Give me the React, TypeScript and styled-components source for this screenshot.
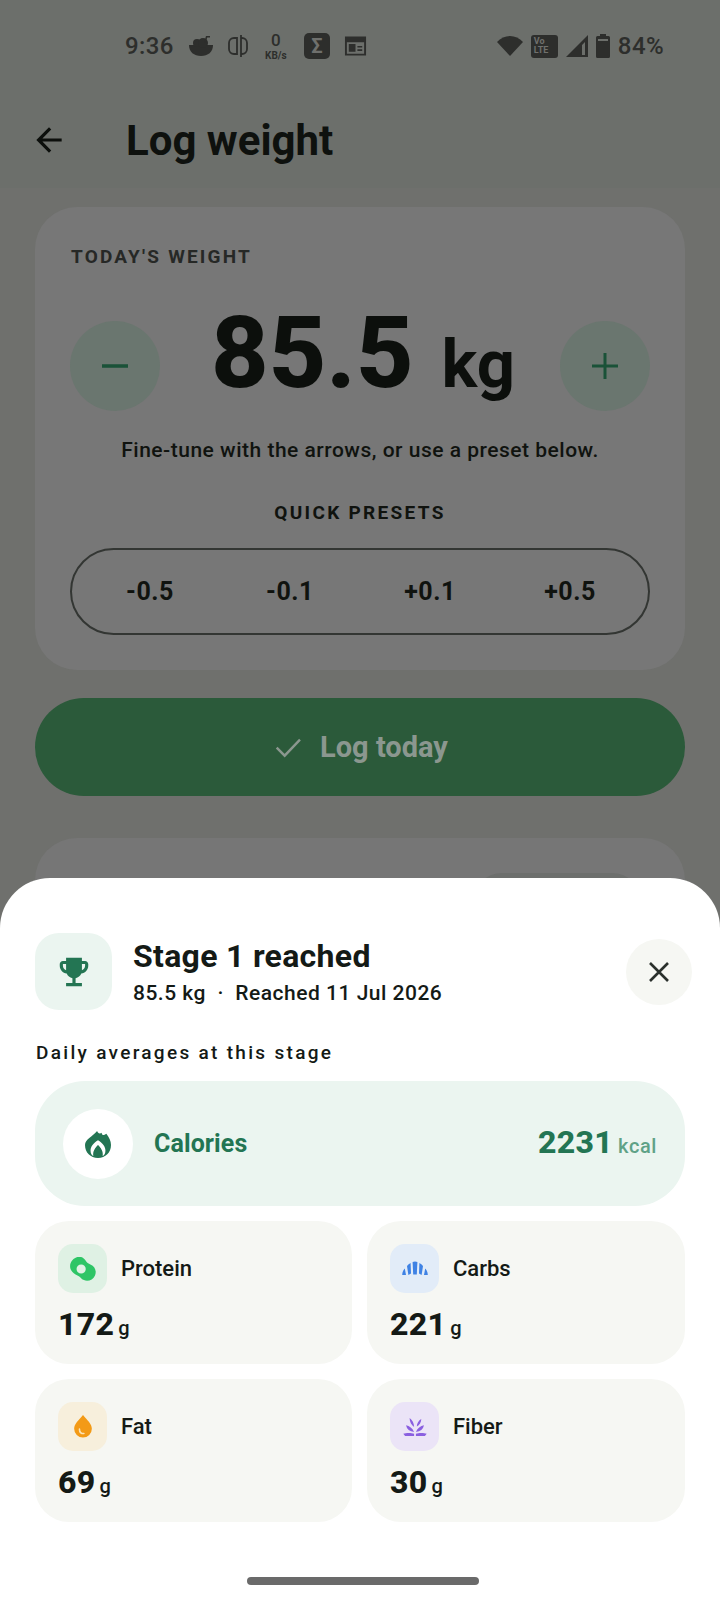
import styled, { createGlobalStyle } from "styled-components";

const GlobalStyle = createGlobalStyle`
  html, body {
    margin: 0;
    padding: 0;
    background: #6f706d;
    font-family: Roboto, "Liberation Sans", sans-serif;
  }
  * { box-sizing: border-box; }
`;

const Screen = styled.div`
  position: relative;
  width: 720px;
  height: 1600px;
  overflow: hidden;
  background: #6f706d;
  display: flex;
  flex-direction: column;
`;

const Header = styled.header`
  height: 188px;
  background: #6c6f6b;
  display: flex;
  flex-direction: column;
`;

const StatusBar = styled.div`
  height: 92px;
  padding: 0 56px 0 125px;
  display: flex;
  align-items: center;
  justify-content: space-between;
  color: #2d2e2c;
`;

const StatusGroup = styled.div`
  display: flex;
  align-items: center;
  gap: ${(p: { $gap?: number }) => p.$gap ?? 14}px;
`;

const StatusText = styled.span`
  font-size: 24px;
  line-height: 28px;
  font-weight: 500;
  letter-spacing: 0.4px;
`;

const NetSpeed = styled.div`
  display: flex;
  flex-direction: column;
  align-items: center;
  gap: 2px;
  font-weight: 700;
  width: 28px;
  span:first-child { font-size: 17px; line-height: 18px; font-weight: 500; }
  span:last-child { font-size: 10px; line-height: 10px; }
`;

const SigmaBadge = styled.div`
  width: 26px;
  height: 26px;
  border-radius: 5px;
  background: #2d2e2c;
  color: #6f706d;
  font-size: 20px;
  font-weight: 700;
  display: flex;
  align-items: center;
  justify-content: center;
`;

const VolteBadge = styled.div`
  width: 27px;
  height: 23px;
  border-radius: 3px;
  background: #2d2e2c;
  color: #6f706d;
  font-size: 9px;
  line-height: 9px;
  font-weight: 700;
  padding: 2px 3px;
`;

const AppBar = styled.div`
  display: flex;
  align-items: center;
  height: 94px;
  padding: 2px 0 0 30px;
  color: #0c0f0c;
`;

const PageTitle = styled.h1`
  margin: 0 0 0 58px;
  font-size: 42px;
  font-weight: 700;
  color: #0e110e;
`;

const Content = styled.main`
  padding: 19px 35px 0;
  display: flex;
  flex-direction: column;
`;

const WeightCard = styled.section`
  height: 463px;
  border-radius: 42px;
  background: #777777;
  padding: 39px 35px 0;
  display: flex;
  flex-direction: column;
`;

const CardLabel = styled.div`
  padding-left: 1px;
  font-size: 19px;
  line-height: 22px;
  font-weight: 700;
  letter-spacing: 2.2px;
  color: #262826;
`;

const WeightRow = styled.div`
  margin-top: 53px;
  height: 90px;
  display: flex;
  align-items: center;
  justify-content: space-between;
`;

const StepButton = styled.div`
  width: 90px;
  height: 90px;
  border-radius: 50%;
  background: #6a766f;
  color: #1a5238;
  display: flex;
  align-items: center;
  justify-content: center;
`;

const WeightValue = styled.div`
  display: flex;
  align-items: baseline;
  gap: 28px;
  height: 90px;
  margin: -26px 0 0 6px;
  color: #0c0f0c;
  font-weight: 800;
  line-height: 90px;
`;

const WeightNumber = styled.span`
  font-size: 100px;
`;

const WeightUnit = styled.span`
  font-size: 67px;
  font-weight: 700;
`;

const Hint = styled.p`
  margin: 26px 0 0;
  text-align: center;
  font-size: 21px;
  line-height: 26px;
  font-weight: 500;
  letter-spacing: 0.5px;
  color: #10130f;
`;

const PresetLabel = styled.div`
  margin-top: 38px;
  text-align: center;
  font-size: 19px;
  line-height: 24px;
  font-weight: 700;
  letter-spacing: 2.3px;
  color: #10130f;
`;

const PresetPill = styled.div`
  margin-top: 23px;
  height: 87px;
  border: 2px solid #333633;
  border-radius: 44px;
  display: grid;
  grid-template-columns: repeat(4, 1fr);
  align-items: center;
  padding: 0 8px;
`;

const Preset = styled.div`
  text-align: center;
  font-size: 25px;
  font-weight: 700;
  color: #10130f;
  letter-spacing: 0.5px;
`;

const LogButton = styled.div`
  margin-top: 28px;
  height: 98px;
  border-radius: 49px;
  background: #2b5a3a;
  color: #8b978f;
  display: flex;
  align-items: center;
  justify-content: center;
  gap: 16px;
  font-size: 29px;
  font-weight: 700;
`;

const NextCard = styled.section`
  margin-top: 42px;
  height: 120px;
  border-radius: 42px;
  background: #767676;
  display: flex;
  justify-content: flex-end;
  padding: 35px 43px 0 0;
`;

const NextChip = styled.div`
  width: 170px;
  height: 60px;
  border-radius: 30px;
  background: #6d6f6d;
`;

const Sheet = styled.aside`
  position: absolute;
  left: 0;
  right: 0;
  bottom: 0;
  height: 722px;
  background: #ffffff;
  border-radius: 50px 50px 0 0;
  padding: 55px 35px 0;
  display: flex;
  flex-direction: column;
  color: #141a16;
`;

const SheetHeader = styled.div`
  display: flex;
  align-items: center;
  height: 77px;
`;

const TrophyBox = styled.div`
  width: 77px;
  height: 77px;
  border-radius: 24px;
  background: #ebf5f0;
  color: #237553;
  display: flex;
  align-items: center;
  justify-content: center;
  flex: none;
`;

const SheetHeading = styled.div`
  margin-left: 21px;
  flex: 1;
`;

const SheetTitle = styled.h2`
  margin: 0;
  font-size: 32px;
  line-height: 38px;
  font-weight: 700;
  letter-spacing: 0.3px;
`;

const SheetSub = styled.div`
  margin-top: 5px;
  font-size: 21px;
  line-height: 26px;
  font-weight: 500;
  letter-spacing: 0.5px;
  white-space: pre;
`;

const CloseButton = styled.div`
  width: 66px;
  height: 66px;
  border-radius: 50%;
  background: #f6f7f3;
  margin-right: -7px;
  color: #2a302c;
  display: flex;
  align-items: center;
  justify-content: center;
`;

const SectionLabel = styled.div`
  margin-top: 31px;
  padding-left: 1px;
  font-size: 19px;
  line-height: 24px;
  font-weight: 500;
  letter-spacing: 2.3px;
`;

const CaloriesCard = styled.div`
  margin-top: 16px;
  height: 125px;
  border-radius: 50px;
  background: #ebf5f0;
  padding: 0 28px;
  display: flex;
  align-items: center;
  color: #237553;
`;

const CaloriesIcon = styled.div`
  width: 70px;
  height: 70px;
  border-radius: 50%;
  background: #ffffff;
  display: flex;
  align-items: center;
  justify-content: center;
`;

const CaloriesName = styled.div`
  margin-left: 21px;
  flex: 1;
  font-size: 25px;
  font-weight: 700;
  letter-spacing: 0.1px;
`;

const CaloriesValue = styled.div`
  margin-bottom: 3px;
  font-size: 32px;
  font-weight: 800;
  letter-spacing: 0.3px;
`;

const CaloriesUnit = styled.span`
  margin-left: 5px;
  font-size: 20px;
  font-weight: 500;
  letter-spacing: 0.6px;
  color: #5fa287;
`;

const MacroGrid = styled.div`
  margin-top: 15px;
  display: grid;
  grid-template-columns: 317px 1fr;
  gap: 15px;
`;

const MacroCard = styled.div`
  height: 143px;
  border-radius: 34px;
  background: #f6f7f3;
  padding: 23px 23px 0;
`;

const MacroHead = styled.div`
  display: flex;
  align-items: center;
  gap: 14px;
  font-size: 22px;
  font-weight: 500;
`;

const MacroIcon = styled.div<{ $bg: string }>`
  width: 49px;
  height: 49px;
  border-radius: 15px;
  background: ${(p) => p.$bg};
  display: flex;
  align-items: center;
  justify-content: center;
`;

const MacroValue = styled.div`
  margin-top: 11px;
  font-size: 32px;
  line-height: 40px;
  font-weight: 800;
  letter-spacing: 0.3px;
`;

const MacroUnit = styled.span`
  margin-left: 4px;
  font-size: 20px;
  font-weight: 500;
`;

const HomeBar = styled.div`
  position: absolute;
  left: 247px;
  bottom: 15px;
  width: 232px;
  height: 8px;
  border-radius: 4px;
  background: #6a6a6a;
`;

const BowlIcon = () => (
  <svg width="26" height="26" viewBox="0 0 26 26" fill="currentColor">
    <path d="M1 12h24c0 7-5 11-12 11S1 19 1 12z" />
    <circle cx="9" cy="10" r="4" />
    <circle cx="15" cy="10" r="5" />
    <path d="M16 10l2-7h4v1.600h-2.800L17.600 10z" />
  </svg>
);

const RotateIcon = () => (
  <svg width="20" height="22" viewBox="0 0 20 22" fill="none" stroke="currentColor" strokeWidth="1.800">
    <path d="M9 3H6a5 5 0 0 0-5 5v6a5 5 0 0 0 5 5h3z" />
    <path d="M13 3h1a5 5 0 0 1 5 5v6a5 5 0 0 1-5 5h-1" />
    <path d="M13 0v22" />
  </svg>
);

const CalendarIcon = () => (
  <svg width="23" height="22" viewBox="0 0 24 22" fill="currentColor">
    <path d="M1 1h22v20H1zM3 7v12h18V7z" fillRule="evenodd" />
    <path d="M5 9h7v8H5zM14 11h5v1.600h-5zM14 14.500h5v1.600h-5z" />
  </svg>
);

const WifiIcon = () => (
  <svg width="26" height="20" viewBox="0 0 26 20" fill="currentColor">
    <path d="M13 20L0 6c7-8 19-8 26 0z" />
  </svg>
);

const SignalIcon = () => (
  <svg width="22" height="22" viewBox="0 0 22 22" fill="currentColor">
    <path d="M0 22L22 0v22zM16 10v10h3V7z" fillRule="evenodd" />
  </svg>
);

const BatteryIcon = () => (
  <svg width="14" height="24" viewBox="0 0 14 24" fill="currentColor">
    <path d="M4 0h6v2h2.500A1.500 1.500 0 0 1 14 3.500v19a1.500 1.500 0 0 1-1.500 1.500h-11A1.500 1.500 0 0 1 0 22.500v-19A1.500 1.500 0 0 1 1.500 2H4zM2 5v2h10V5z" fillRule="evenodd" />
  </svg>
);

const BackArrow = () => (
  <svg width="38" height="38" viewBox="0 0 24 24" fill="currentColor">
    <path d="M20 11H7.830l5.590-5.590L12 4l-8 8 8 8 1.410-1.410L7.830 13H20v-2z" />
  </svg>
);

const MinusIcon = () => (
  <svg width="28" height="28" viewBox="0 0 28 28" fill="currentColor">
    <rect x="1" y="12.250" width="26" height="3.500" />
  </svg>
);

const PlusIcon = () => (
  <svg width="28" height="28" viewBox="0 0 28 28" fill="currentColor">
    <rect x="1" y="12.500" width="26" height="3" />
    <rect x="12.500" y="1" width="3" height="26" />
  </svg>
);

const CheckIcon = () => (
  <svg width="32" height="32" viewBox="0 0 24 24" fill="none" stroke="currentColor" strokeWidth="1.800">
    <path d="M3.500 12.500l6 6L21 6.500" />
  </svg>
);

const TrophyIcon = () => (
  <svg width="38" height="38" viewBox="0 0 24 24" fill="currentColor">
    <path d="M19 5h-2V3H7v2H5c-1.100 0-2 .9-2 2v1c0 2.550 1.920 4.630 4.390 4.940.63 1.500 1.980 2.630 3.610 2.960V19H7v2h10v-2h-4v-3.100c1.630-.33 2.980-1.460 3.610-2.960C19.080 12.630 21 10.550 21 8V7c0-1.100-.9-2-2-2zM5 8V7h2v3.820C5.840 10.400 5 9.300 5 8zm14 0c0 1.300-.84 2.400-2 2.820V7h2v1z" />
  </svg>
);

const CloseIcon = () => (
  <svg width="24" height="24" viewBox="0 0 24 24" fill="none" stroke="currentColor" strokeWidth="2.600">
    <path d="M3 3l18 18M21 3L3 21" />
  </svg>
);

const FlameIcon = () => (
  <svg width="26" height="28" viewBox="0 0 28 30" fill="#237553">
    <path
      fillRule="evenodd"
      d="M13 1c1 3 3 3 5 2 0 3 2 3 5 1 3 4 5 8 5 12 0 8-6 14-14 14S0 24 0 16C0 10 8 7 13 1zM14 11c-5 3-8 7-8 11 0 3 1 5 3 6-1-5 2-9 5-12 3 3 6 7 5 12 2-1 3-3 3-6 0-4-3-8-8-11z"
    />
    <path d="M14 17c2 2 4 4 4 7a4 4 0 0 1-8 0c0-3 2-5 4-7z" />
  </svg>
);

const EggIcon = () => (
  <svg width="26" height="24" viewBox="0 0 28 26" fill="#2ec566">
    <path
      fillRule="evenodd"
      d="M8 0c4-1 7 1 9 4 1 2 3 3 5 4 5 2 7 7 5 12-2 5-8 7-12 5-3-1-4-4-7-5-4-2-8-5-8-10C0 5 4 1 8 0zM12 8a5 5 0 1 0 0 10 5 5 0 0 0 0-10z"
    />
  </svg>
);

const CroissantIcon = () => (
  <svg width="26" height="15" viewBox="0 0 26 15" fill="#3f82e4">
    <path d="M10.600 1c1.400-.7 3.400-.7 4.800 0l-.6 12.500h-3.600z" />
    <path d="M8.600 2L9 12.500 6.400 14 5 5c1-1.400 2.200-2.400 3.600-3zM17.400 2c1.400.6 2.600 1.600 3.600 3l-1.400 9-2.600-1.500z" />
    <path d="M2.800 7.500L4 14H.2c0-2.500 1.100-5 2.600-6.500zM23.200 7.500c1.500 1.500 2.600 4 2.600 6.500H22z" />
  </svg>
);

const DropIcon = () => (
  <svg width="20" height="23" viewBox="0 0 22 26">
    <path fill="#f39a16" d="M11 0c5 6 10 10 10 15.500a10 10 0 0 1-20 0C1 10 6 6 11 0z" />
    <path fill="none" stroke="#fbe3b6" strokeWidth="1.800" strokeLinecap="round" d="M7 16c0 3 2 5 5 5" />
  </svg>
);

const SproutIcon = () => (
  <svg width="24" height="18" viewBox="0 0 26 20" fill="#8a5fe0">
    <path d="M0 17.500c3-1 9-1 12 0V20H2zM14 17.500c3-1 9-1 12 0L24 20H14z" />
    <path d="M3 8c4 1 7 3 9 7.500-5-.5-8-3-9-7.500zM23 8c-4 1-7 3-9 7.500 5-.5 8-3 9-7.500z" />
    <path d="M7 0c3 2 5 6 5 10-3-2-5-6-5-10zM20 1c-3 1.500-5 5-5 8.500 3-1.500 5-5 5-8.500z" />
  </svg>
);

const macros = [
  { name: "Protein", value: 172, bg: "#dff1e4", icon: <EggIcon /> },
  { name: "Carbs", value: 221, bg: "#e2ecf8", icon: <CroissantIcon /> },
  { name: "Fat", value: 69, bg: "#f7efdc", icon: <DropIcon /> },
  { name: "Fiber", value: 30, bg: "#ebe4f7", icon: <SproutIcon /> },
];

const presets = ["-0.5", "-0.1", "+0.1", "+0.5"];

const App = () => {
  return (
    <Screen>
      <GlobalStyle />
      <Header>
        <StatusBar>
          <StatusGroup $gap={14}>
            <StatusText>9:36</StatusText>
            <BowlIcon />
            <RotateIcon />
            <NetSpeed>
              <span>0</span>
              <span>KB/s</span>
            </NetSpeed>
            <SigmaBadge>Σ</SigmaBadge>
            <CalendarIcon />
          </StatusGroup>
          <StatusGroup $gap={8}>
            <WifiIcon />
            <VolteBadge>
              Vo
              <br />
              LTE
            </VolteBadge>
            <SignalIcon />
            <BatteryIcon />
            <StatusText>84%</StatusText>
          </StatusGroup>
        </StatusBar>
        <AppBar>
          <BackArrow />
          <PageTitle>Log weight</PageTitle>
        </AppBar>
      </Header>

      <Content>
        <WeightCard>
          <CardLabel>TODAY'S WEIGHT</CardLabel>
          <WeightRow>
            <StepButton>
              <MinusIcon />
            </StepButton>
            <WeightValue>
              <WeightNumber>85.5</WeightNumber>
              <WeightUnit>kg</WeightUnit>
            </WeightValue>
            <StepButton>
              <PlusIcon />
            </StepButton>
          </WeightRow>
          <Hint>Fine-tune with the arrows, or use a preset below.</Hint>
          <PresetLabel>QUICK PRESETS</PresetLabel>
          <PresetPill>
            {presets.map((p) => (
              <Preset key={p}>{p}</Preset>
            ))}
          </PresetPill>
        </WeightCard>

        <LogButton>
          <CheckIcon />
          Log today
        </LogButton>

        <NextCard>
          <NextChip />
        </NextCard>
      </Content>

      <Sheet>
        <SheetHeader>
          <TrophyBox>
            <TrophyIcon />
          </TrophyBox>
          <SheetHeading>
            <SheetTitle>Stage 1 reached</SheetTitle>
            <SheetSub>85.5 kg  ·  Reached 11 Jul 2026</SheetSub>
          </SheetHeading>
          <CloseButton>
            <CloseIcon />
          </CloseButton>
        </SheetHeader>

        <SectionLabel>Daily averages at this stage</SectionLabel>

        <CaloriesCard>
          <CaloriesIcon>
            <FlameIcon />
          </CaloriesIcon>
          <CaloriesName>Calories</CaloriesName>
          <CaloriesValue>
            2231
            <CaloriesUnit>kcal</CaloriesUnit>
          </CaloriesValue>
        </CaloriesCard>

        <MacroGrid>
          {macros.map((m) => (
            <MacroCard key={m.name}>
              <MacroHead>
                <MacroIcon $bg={m.bg}>{m.icon}</MacroIcon>
                {m.name}
              </MacroHead>
              <MacroValue>
                {m.value}
                <MacroUnit>g</MacroUnit>
              </MacroValue>
            </MacroCard>
          ))}
        </MacroGrid>
      </Sheet>
      <HomeBar />
    </Screen>
  );
};

export default App;
